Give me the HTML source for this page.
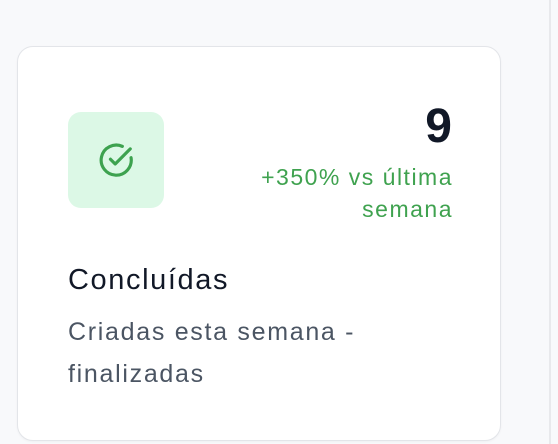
<!DOCTYPE html>
<html><head><meta charset="utf-8"><style>
html,body{margin:0;padding:0}
body{width:558px;height:444px;background:#f8f9fb;position:relative;overflow:hidden;font-family:"Liberation Sans",sans-serif}
.vl{position:absolute;left:549px;top:0;width:2px;height:444px;background:#e8e9ec}
.card{position:absolute;left:17px;top:46px;width:482px;height:393px;background:#fff;border:1.5px solid #e3e5e9;border-radius:16px;box-shadow:0 1px 2px rgba(0,0,0,.04)}
.ib{position:absolute;left:50px;top:65px;width:96px;height:96px;background:#dcf8e6;border-radius:13px}
.ib svg{position:absolute;left:29px;top:29px}
.num{position:absolute;right:48px;top:52px;font-size:48px;font-weight:bold;color:#111827;line-height:56px}
.pct{position:absolute;right:47px;top:114px;text-align:right;font-size:23px;line-height:32px;color:#3fa24f;letter-spacing:1.5px}
.t{position:absolute;left:50px;top:214px;font-size:29px;color:#111827;line-height:38px;letter-spacing:1.6px}
.d{position:absolute;left:50px;top:264px;font-size:25px;color:#4b5563;line-height:42px;letter-spacing:1.7px}
</style></head><body>
<div class="vl"></div>
<div class="card">
<div class="ib"><svg width="38" height="38" viewBox="0 0 24 24" fill="none" stroke="#3da24f" stroke-width="2" stroke-linecap="round" stroke-linejoin="round"><path d="M21.5 10.5A9.5 9.5 0 1 1 16 3.4"/><path d="M8.5 11.5l3 3L21 5"/></svg></div>
<div class="num">9</div>
<div class="pct">+350% vs última<br>semana</div>
<div class="t">Concluídas</div>
<div class="d">Criadas esta semana -<br>finalizadas</div>
</div>
</body></html>
